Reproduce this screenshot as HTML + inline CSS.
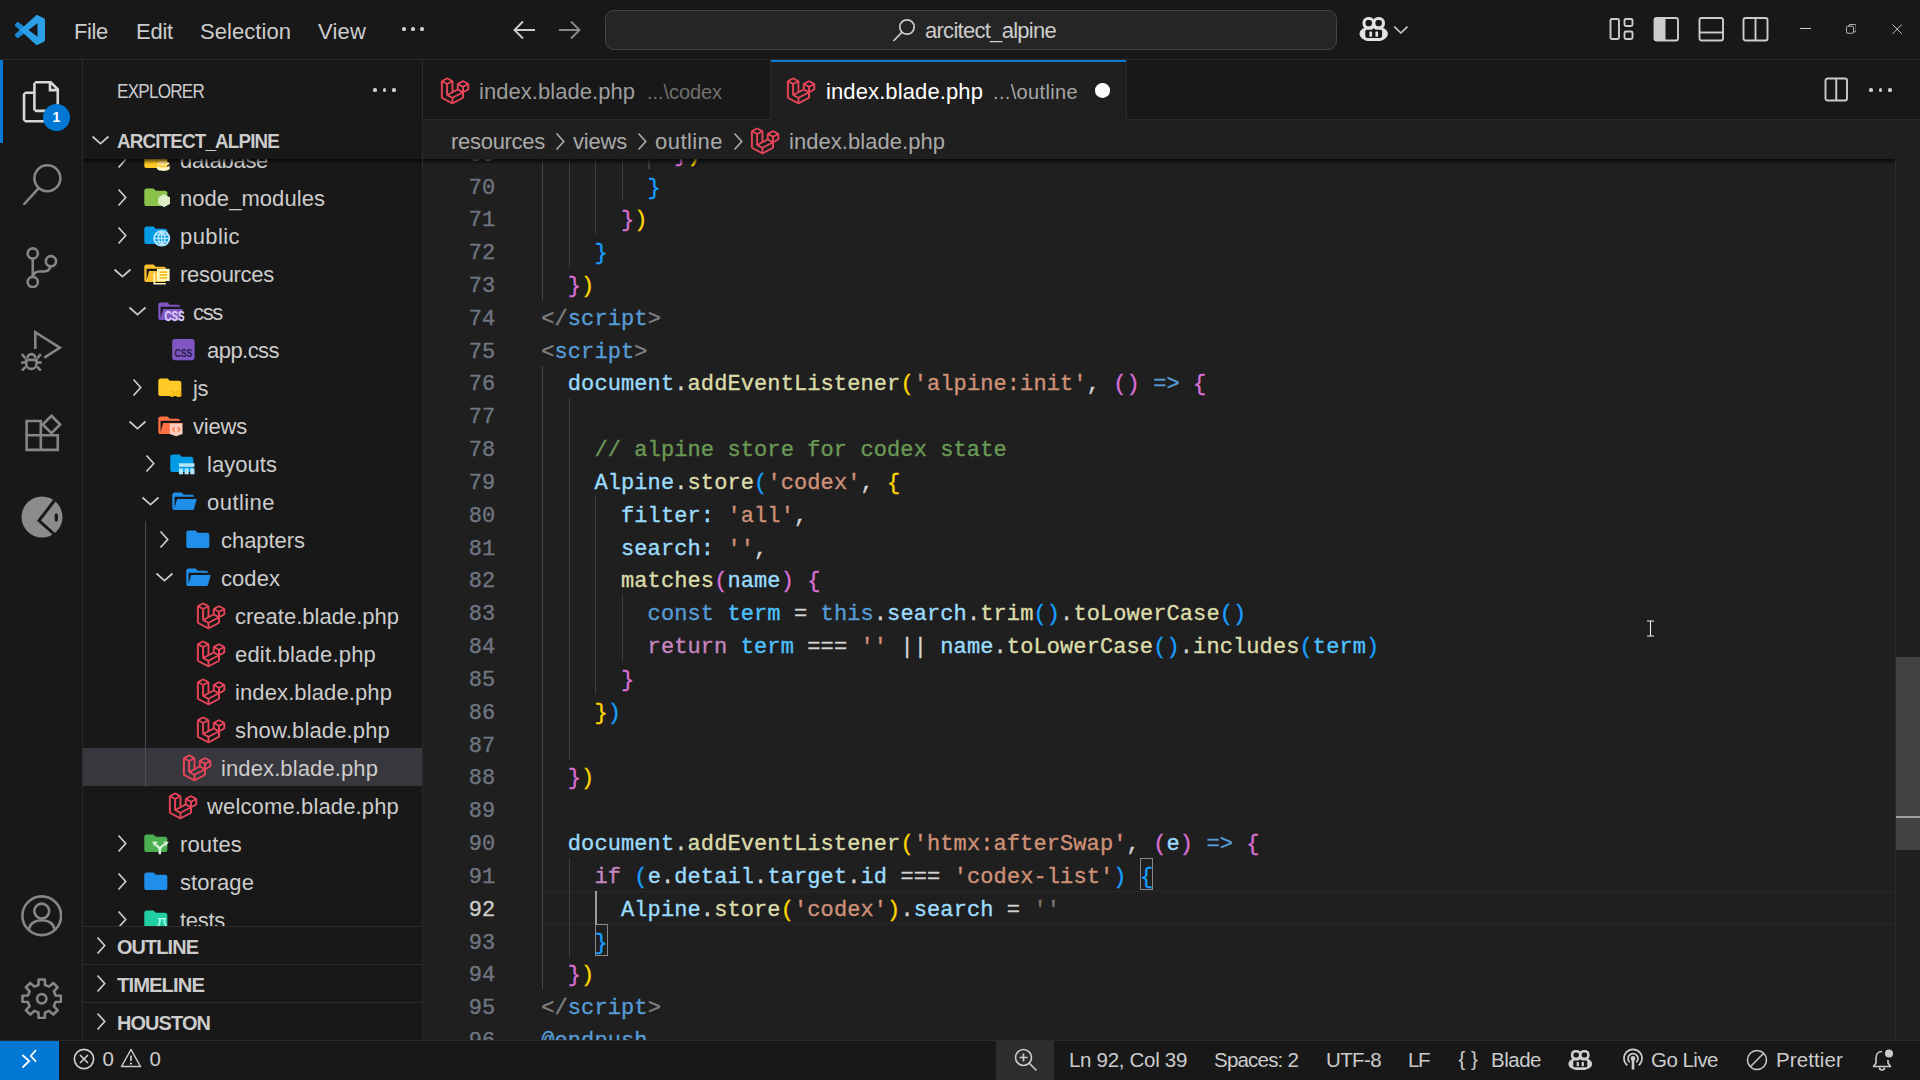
<!DOCTYPE html>
<html lang="en"><head><meta charset="utf-8"><title>index.blade.php - arcitect_alpine - Visual Studio Code</title>
<style>
html,body{margin:0;padding:0;background:#1f1f1f;}
body{width:1920px;height:1080px;position:relative;overflow:hidden;font-family:"Liberation Sans",sans-serif;color:#ccc;}
.b{position:absolute;display:block;}
.t{position:absolute;white-space:pre;}
.c{position:absolute;white-space:pre;font-family:"Liberation Mono",monospace;font-size:22px;-webkit-text-stroke:0.35px;line-height:33px;height:33px;letter-spacing:0.1px;color:#d4d4d4;}
.c span{letter-spacing:inherit}
</style></head>
<body>
<div class="b" style="left:0px;top:0px;width:1920px;height:60px;background:#181818;"></div>
<div class="b" style="left:0px;top:59px;width:1920px;height:1px;background:#2b2b2b;"></div>
<div class="b" style="left:0px;top:60px;width:83px;height:981px;background:#181818;"></div>
<div class="b" style="left:82px;top:60px;width:1px;height:981px;background:#2b2b2b;"></div>
<div class="b" style="left:83px;top:60px;width:340px;height:981px;background:#181818;"></div>
<div class="b" style="left:422px;top:60px;width:1px;height:981px;background:#2b2b2b;"></div>
<div class="b" style="left:423px;top:60px;width:1497px;height:60px;background:#181818;"></div>
<div class="b" style="left:423px;top:119px;width:1497px;height:1px;background:#2b2b2b;"></div>
<div class="b" style="left:423px;top:120px;width:1497px;height:921px;background:#1f1f1f;"></div>
<svg class="b" style="left:15px;top:15px;" width="30" height="30" viewBox="0 0 100 100" preserveAspectRatio="none"><path fill="#2a9fe6" fill-rule="evenodd" d="M70.9119 99.3171C72.4869 99.9307 74.2828 99.8914 75.8725 99.1264L96.4608 89.2197C98.6242 88.1787 100 85.9892 100 83.5872V16.4133C100 14.0113 98.6243 11.8218 96.4609 10.7808L75.8725 0.873756C73.7862 -0.130129 71.3446 0.11576 69.5135 1.44695C69.252 1.63711 69.0028 1.84943 68.769 2.08341L29.3551 38.0415L12.1872 25.0096C10.589 23.7965 8.35363 23.8959 6.86933 25.2461L1.36303 30.2549C-0.452552 31.9064 -0.454633 34.7627 1.35853 36.417L16.2471 50.0001L1.35853 63.5832C-0.454633 65.2374 -0.452552 68.0938 1.36303 69.7453L6.86933 74.7541C8.35363 76.1043 10.589 76.2037 12.1872 74.9905L29.3551 61.9587L68.769 97.9167C69.3925 98.5406 70.1246 99.0104 70.9119 99.3171ZM75.0152 27.2989L45.1091 50.0001L75.0152 72.7012V27.2989Z"/><path fill="#1b86cf" d="M1.36 30.25L6.87 25.25C8.35 23.9 10.59 23.8 12.19 25.01L29.36 38.04 16.25 50 1.36 36.42C-0.45 34.76-0.45 31.91 1.36 30.25ZM1.36 69.75L6.87 74.75C8.35 76.1 10.59 76.2 12.19 74.99L29.36 61.96 16.25 50 1.36 63.58C-0.45 65.24-0.45 68.09 1.36 69.75Z"/></svg>
<div class="t" style="left:74.00px;top:14.50px;font-size:22px;line-height:33px;color:#ccc;letter-spacing:-0.363px;">File</div>
<div class="t" style="left:136.00px;top:14.50px;font-size:22px;line-height:33px;color:#ccc;letter-spacing:-0.228px;">Edit</div>
<div class="t" style="left:200.00px;top:14.50px;font-size:22px;line-height:33px;color:#ccc;letter-spacing:0.055px;">Selection</div>
<div class="t" style="left:318.00px;top:14.50px;font-size:22px;line-height:33px;color:#ccc;letter-spacing:0.178px;">View</div>
<div class="b" style="left:402.4px;top:27.4px;width:3.2px;height:3.2px;border-radius:50%;background:#ccc"></div>
<div class="b" style="left:411.4px;top:27.4px;width:3.2px;height:3.2px;border-radius:50%;background:#ccc"></div>
<div class="b" style="left:420.4px;top:27.4px;width:3.2px;height:3.2px;border-radius:50%;background:#ccc"></div>
<svg class="b" style="left:512px;top:19px;" width="26" height="22" viewBox="0 0 26 22" preserveAspectRatio="none"><path d="M23 11H3 M11 2.500L2.500 11L11 19.500" fill="none" stroke="#ccc" stroke-width="1.9" stroke-linejoin="miter"/></svg>
<svg class="b" style="left:557px;top:19px;" width="26" height="22" viewBox="0 0 26 22" preserveAspectRatio="none"><path d="M2 11H22 M14 2.500L22.500 11L14 19.500" fill="none" stroke="#8a8a8a" stroke-width="1.9"/></svg>
<div class="b" style="left:605px;top:10px;width:730px;height:38px;background:#252525;border:1px solid #444;border-radius:9px"></div>
<svg class="b" style="left:891px;top:17px;" width="26" height="26" viewBox="0 0 26 26" preserveAspectRatio="none"><circle cx="16" cy="10" r="7.2" fill="none" stroke="#ccc" stroke-width="1.7"/><path d="M10.8 15.3L2.5 24" stroke="#ccc" stroke-width="1.7" fill="none"/></svg>
<div class="t" style="left:925.00px;top:13.50px;font-size:22px;line-height:33px;color:#ccc;letter-spacing:-0.724px;">arcitect_alpine</div>
<svg class="b" style="left:1358.5px;top:16.5px;" width="29.4" height="24.8" viewBox="0 0 29.400 24.800" preserveAspectRatio="none"><g fill="#e2e2e2"><rect x="3.500" y="0" width="12.400" height="12.500" rx="5.600"/><rect x="13.500" y="0" width="12.400" height="12.500" rx="5.600"/><ellipse cx="14.700" cy="16.800" rx="14.200" ry="8"/></g><g fill="#181818"><rect x="6.500" y="3" width="6.500" height="6.200" rx="2.400"/><rect x="16.400" y="3" width="6.500" height="6.200" rx="2.400"/><path d="M6.300 14.300C6.300 13.400 7 12.800 7.900 12.800H12.700L14.700 11.300L16.700 12.800H21.500C22.400 12.800 23.100 13.400 23.100 14.300V19C23.100 20.100 22.300 20.900 21.200 20.900H8.200C7.100 20.900 6.300 20.100 6.300 19Z"/></g><g fill="#e2e2e2"><rect x="10.400" y="14.400" width="2.700" height="5.300" rx="0.600"/><rect x="16.400" y="14.400" width="2.700" height="5.300" rx="0.600"/></g></svg>
<svg class="b" style="left:1393px;top:25px;" width="16" height="10" viewBox="0 0 16 10" preserveAspectRatio="none"><path d="M1.300 1.600L7.900 8L14.500 1.600" fill="none" stroke="#ccc" stroke-width="1.600"/></svg>
<svg class="b" style="left:1609px;top:17px;" width="27" height="25" viewBox="0 0 27 25" preserveAspectRatio="none"><rect x="1.500" y="2" width="8.500" height="20" rx="1.500" fill="none" stroke="#ccc" stroke-width="1.900"/><rect x="15.500" y="2" width="8" height="7" rx="1.500" fill="none" stroke="#ccc" stroke-width="1.900"/><rect x="15.500" y="14.500" width="8" height="7.500" rx="1.500" fill="none" stroke="#ccc" stroke-width="1.900"/></svg>
<svg class="b" style="left:1653px;top:16px;" width="27" height="27" viewBox="0 0 27 27" preserveAspectRatio="none"><rect x="1.500" y="2" width="23.500" height="22.500" rx="2" fill="none" stroke="#ccc" stroke-width="1.900"/><rect x="1.500" y="2" width="11" height="22.500" fill="#ccc"/></svg>
<svg class="b" style="left:1698px;top:16px;" width="27" height="27" viewBox="0 0 27 27" preserveAspectRatio="none"><rect x="1.500" y="2" width="23.500" height="22.500" rx="2" fill="none" stroke="#ccc" stroke-width="1.900"/><path d="M1.500 16.500H25" stroke="#ccc" stroke-width="1.900"/></svg>
<svg class="b" style="left:1742px;top:16px;" width="28" height="27" viewBox="0 0 28 27" preserveAspectRatio="none"><rect x="1.500" y="2" width="24" height="22.500" rx="2" fill="none" stroke="#ccc" stroke-width="1.900"/><path d="M13.500 2V24.500" stroke="#ccc" stroke-width="1.900"/></svg>
<div class="b" style="left:1800px;top:28px;width:11px;height:1px;background:#ccc;"></div>
<svg class="b" style="left:1845.8px;top:24.3px;" width="10.6" height="10.6" viewBox="0 0 12 12" preserveAspectRatio="none"><rect x="0.500" y="2.500" width="8" height="8" rx="1.500" fill="none" stroke="#ccc" stroke-width="1"/><path d="M3 2.500V2C3 1.200 3.700 0.500 4.500 0.500H10C10.800 0.500 11.500 1.200 11.500 2V7.500C11.500 8.300 10.800 9 10 9H9" fill="none" stroke="#ccc" stroke-width="1"/></svg>
<svg class="b" style="left:1892px;top:23.8px;" width="10.4" height="10.4" viewBox="0 0 12 12" preserveAspectRatio="none"><path d="M0.500 0.500L11.500 11.500M11.500 0.500L0.500 11.500" stroke="#ccc" stroke-width="1.100"/></svg>
<div class="b" style="left:0px;top:60px;width:3px;height:83px;background:#0078d4;"></div>
<svg class="b" style="left:20.75px;top:81.25px;" width="41.5" height="41.5" viewBox="0 0 24 24" preserveAspectRatio="none"><path fill="#d7d7d7" d="M17.5 0h-9L7 1.5V6H2.5L1 7.500v15.070L2.500 24h12.070L16 22.570V18h4.700l1.300-1.430V4.500L17.500 0zm0 2.120l2.380 2.380H17.500V2.120zm-3 20.380h-12v-15H7v9.070L8.500 18h6v4.500zm6-6h-12v-15H16V6h4.500v10.500z"/></svg>
<div class="b" style="left:43px;top:103.500px;width:27px;height:27px;border-radius:50%;background:#0078d4;color:#fff;font-weight:bold;font-size:14px;line-height:27px;text-align:center">1</div>
<svg class="b" style="left:20.75px;top:163.85px;" width="41.5" height="41.5" viewBox="0 0 24 24" preserveAspectRatio="none"><circle cx="15.250" cy="8.250" r="7.500" fill="none" stroke="#868686" stroke-width="1.500"/><path d="M10.200 13.900L1.500 23.600" stroke="#868686" stroke-width="1.500"/></svg>
<svg class="b" style="left:20.75px;top:246.85000000000002px;" width="41.5" height="41.5" viewBox="0 0 24 24" preserveAspectRatio="none"><g fill="none" stroke="#868686" stroke-width="1.500"><circle cx="6.800" cy="3.750" r="2.950"/><circle cx="6.800" cy="20.200" r="2.950"/><circle cx="17.300" cy="8.200" r="2.950"/><path d="M6.800 6.700V17.250M17 11.200C16.600 13.300 15 14.200 13.500 14.200H10.600C8.500 14.200 6.800 15.600 6.800 17.250"/></g></svg>
<svg class="b" style="left:20.75px;top:329.75px;" width="41.5" height="41.5" viewBox="0 0 24 24" preserveAspectRatio="none"><g fill="none" stroke="#868686" stroke-width="1.500"><path d="M8.250 11V1.300L22.400 10.250L13.500 16"/><path d="M3 17.250V19.500A3 3 0 0 0 9 19.500V17.250Z M3.750 16.200A2.250 2.250 0 0 1 8.250 16.200 M0.500 14L2.500 16.200 M11.500 14L9.500 16.200 M0 18.750H3 M9 18.750H12 M0.500 23.500L2.600 21.300 M11.500 23.500L9.400 21.300"/></g></svg>
<svg class="b" style="left:20.75px;top:412.75px;" width="41.5" height="41.5" viewBox="0 0 24 24" preserveAspectRatio="none"><g fill="none" stroke="#868686" stroke-width="1.500"><path d="M3.250 4.650H11.450V12.900H21.250V21.350H3.250Z M3.250 12.900H11.450V21.350"/><path d="M17.600 1.600L22.650 6.650L17.600 11.700L12.550 6.650Z"/></g></svg>
<svg class="b" style="left:20.5px;top:495.5px;" width="42" height="42" viewBox="0 0 42 42" preserveAspectRatio="none"><circle cx="21" cy="21" r="20.500" fill="#8b8b8b"/><path d="M33.500 4.500L18 24.500L33.500 38.500" fill="none" stroke="#181818" stroke-width="3"/><ellipse cx="35.300" cy="21.500" rx="1.700" ry="4.300" fill="#181818"/></svg>
<svg class="b" style="left:20.75px;top:895.25px;" width="41.5" height="41.5" viewBox="0 0 24 24" preserveAspectRatio="none"><g fill="none" stroke="#868686" stroke-width="1.500"><circle cx="12" cy="12" r="11.200"/><circle cx="12" cy="9.300" r="4.300"/><path d="M4.300 20.200C5.200 16.400 8.300 14.600 12 14.600S18.800 16.400 19.700 20.200"/></g></svg>
<svg class="b" style="left:20.75px;top:977.75px;" width="41.5" height="41.5" viewBox="0 0 24 24" preserveAspectRatio="none"><g fill="none" stroke="#868686" stroke-width="1.500" stroke-linejoin="round"><path d="M10.09 4.03L10.23 0.84L13.77 0.84L13.91 4.03L16.28 5.01L18.64 2.86L21.14 5.36L18.99 7.72L19.97 10.09L23.16 10.23L23.16 13.77L19.97 13.91L18.99 16.28L21.14 18.64L18.64 21.14L16.28 18.99L13.91 19.97L13.77 23.16L10.23 23.16L10.09 19.97L7.72 18.99L5.36 21.14L2.86 18.64L5.01 16.28L4.03 13.91L0.84 13.77L0.84 10.23L4.03 10.09L5.01 7.72L2.86 5.36L5.36 2.86L7.72 5.01Z"/><circle cx="12" cy="12" r="2.700"/></g></svg>
<div class="t" style="left:117.00px;top:76.00px;font-size:20px;line-height:30px;color:#ccc;letter-spacing:-0.900px;transform:scaleX(0.8552);transform-origin:0 50%;">EXPLORER</div>
<div class="b" style="left:373.4px;top:88.4px;width:3.200px;height:3.200px;border-radius:50%;background:#ccc"></div>
<div class="b" style="left:382.9px;top:88.4px;width:3.200px;height:3.200px;border-radius:50%;background:#ccc"></div>
<div class="b" style="left:392.4px;top:88.4px;width:3.200px;height:3.200px;border-radius:50%;background:#ccc"></div>
<svg class="b" style="left:90.5px;top:135px;" width="19" height="10" viewBox="0 0 19 10" preserveAspectRatio="none"><path d="M1.500 1.500L9.500 8.700L17.500 1.500" fill="none" stroke="#ccc" stroke-width="1.700"/></svg>
<div class="t" style="left:117.00px;top:126.00px;font-size:20px;line-height:30px;color:#ccc;letter-spacing:-0.900px;font-weight:bold;transform:scaleX(0.9415);transform-origin:0 50%;">ARCITECT_ALPINE</div>
<div class="b" style="left:83px;top:159px;width:339px;height:767px;overflow:hidden">
<div class="b" style="left:0px;top:589.3px;width:339px;height:38px;background:#37373d;"></div>
<div class="b" style="left:61.69999999999999px;top:362px;width:1px;height:265.5px;background:#4a4a4a;"></div>
<svg class="b" style="left:34px;top:-9.2px;" width="10" height="19" viewBox="0 0 10 19" preserveAspectRatio="none"><path d="M1.500 1.500L8.700 9.500L1.500 17.500" fill="none" stroke="#ccc" stroke-width="1.700"/></svg>
<svg class="b" style="left:58.7px;top:-13.024999999999999px;overflow:visible" width="27.65" height="26.549999999999997" viewBox="0 0 24 24" preserveAspectRatio="none"><path fill="#ffca28" d="M10 4H4c-1.110 0-2 .890-2 2v12a2 2 0 0 0 2 2h16a2 2 0 0 0 2-2V8c0-1.110-.900-2-2-2h-8l-2-2z"/><ellipse cx="18.500" cy="15.800" rx="5.500" ry="2" fill="#ffe28a"/><path d="M13 17.200v3.200c0 1.200 2.400 2.100 5.500 2.100s5.500-.900 5.500-2.100v-3.200c0 1.200-2.400 2.100-5.500 2.100s-5.500-.900-5.500-2.100z" fill="#fff3c4"/></svg>
<div class="t" style="left:97.00px;top:-15.40px;font-size:22px;line-height:33px;color:#ccc;letter-spacing:-0.316px;">database</div>
<svg class="b" style="left:34px;top:28.799999999999997px;" width="10" height="19" viewBox="0 0 10 19" preserveAspectRatio="none"><path d="M1.500 1.500L8.700 9.500L1.500 17.500" fill="none" stroke="#ccc" stroke-width="1.700"/></svg>
<svg class="b" style="left:58.7px;top:24.975px;overflow:visible" width="27.65" height="26.549999999999997" viewBox="0 0 24 24" preserveAspectRatio="none"><path fill="#8bc34a" d="M10 4H4c-1.110 0-2 .890-2 2v12a2 2 0 0 0 2 2h16a2 2 0 0 0 2-2V8c0-1.110-.900-2-2-2h-8l-2-2z"/><path d="M19.200 9.800l4.600 2.650v5.300l-4.600 2.650-4.600-2.650v-5.300z" fill="#dcedc8" stroke="#dcedc8" stroke-width="1" stroke-linejoin="round"/></svg>
<div class="t" style="left:97.00px;top:22.60px;font-size:22px;line-height:33px;color:#ccc;letter-spacing:0.055px;">node_modules</div>
<svg class="b" style="left:34px;top:66.8px;" width="10" height="19" viewBox="0 0 10 19" preserveAspectRatio="none"><path d="M1.500 1.500L8.700 9.500L1.500 17.500" fill="none" stroke="#ccc" stroke-width="1.700"/></svg>
<svg class="b" style="left:58.7px;top:62.974999999999994px;overflow:visible" width="27.65" height="26.549999999999997" viewBox="0 0 24 24" preserveAspectRatio="none"><path fill="#039be5" d="M10 4H4c-1.110 0-2 .890-2 2v12a2 2 0 0 0 2 2h16a2 2 0 0 0 2-2V8c0-1.110-.900-2-2-2h-8l-2-2z"/><circle cx="17.100" cy="14.800" r="6.600" fill="#039be5" stroke="#b3e5fc" stroke-width="1.700"/><path d="M10.500 14.800h13.200M11.400 11.600h11.400M11.400 18h11.400M17.100 8.200v13.200M17.100 8.200c-3.800 3.600-3.800 9.600 0 13.200M17.100 8.200c3.800 3.600 3.800 9.600 0 13.200" fill="none" stroke="#b3e5fc" stroke-width="1.250"/></svg>
<div class="t" style="left:97.00px;top:60.60px;font-size:22px;line-height:33px;color:#ccc;letter-spacing:0.419px;">public</div>
<svg class="b" style="left:29.5px;top:109.2px;" width="19" height="10" viewBox="0 0 19 10" preserveAspectRatio="none"><path d="M1.500 1.500L9.500 8.700L17.500 1.500" fill="none" stroke="#ccc" stroke-width="1.700"/></svg>
<svg class="b" style="left:58.7px;top:100.975px;overflow:visible" width="27.65" height="26.549999999999997" viewBox="0 0 24 24" preserveAspectRatio="none"><path fill="#fbc02d" d="M19 20H4a2 2 0 0 1-2-2V6c0-1.110.890-2 2-2h6l2 2h7a2 2 0 0 1 2 2H4v10l2.140-8h17.070l-2.280 8.500c-.230.870-1.010 1.500-1.930 1.500z"/><rect x="13" y="8" width="11" height="11" fill="#fff9c4"/><path d="M15.300 10.900h6.400M15.300 13.500h6.400M15.300 16.100h6.400" stroke="#f9bd22" stroke-width="1.500"/><path d="M10.700 11.500v10h10" fill="none" stroke="#fff9c4" stroke-width="1.500"/></svg>
<div class="t" style="left:97.00px;top:98.60px;font-size:22px;line-height:33px;color:#ccc;letter-spacing:-0.289px;">resources</div>
<svg class="b" style="left:44.5px;top:147.2px;" width="19" height="10" viewBox="0 0 19 10" preserveAspectRatio="none"><path d="M1.500 1.500L9.500 8.700L17.500 1.500" fill="none" stroke="#ccc" stroke-width="1.700"/></svg>
<svg class="b" style="left:72.7px;top:138.97500000000002px;overflow:visible" width="27.65" height="26.549999999999997" viewBox="0 0 24 24" preserveAspectRatio="none"><path fill="#7e57c2" d="M19 20H4a2 2 0 0 1-2-2V6c0-1.110.890-2 2-2h6l2 2h7a2 2 0 0 1 2 2H4v10l2.140-8h17.070l-2.280 8.500c-.230.870-1.010 1.500-1.930 1.500z"/><text x="7.400" y="20.900" font-family="Liberation Sans, sans-serif" font-weight="bold" font-size="12.400" fill="#dccbf8" stroke="#dccbf8" stroke-width="0.300" textLength="17.400" lengthAdjust="spacingAndGlyphs">CSS</text></svg>
<div class="t" style="left:110.00px;top:136.60px;font-size:22px;line-height:33px;color:#ccc;letter-spacing:-1.333px;">css</div>
<svg class="b" style="left:88px;top:176.675px;" width="27.65" height="27.65" viewBox="0 0 24 24" preserveAspectRatio="none"><rect x="1" y="2.500" width="19.500" height="18.500" rx="2.500" fill="#7e57c2"/><text x="3" y="18.500" font-family="Liberation Sans, sans-serif" font-weight="bold" font-size="10" fill="#2a1a4a" textLength="15.500" lengthAdjust="spacingAndGlyphs">CSS</text></svg>
<div class="t" style="left:124.00px;top:174.60px;font-size:22px;line-height:33px;color:#ccc;letter-spacing:-0.546px;">app.css</div>
<svg class="b" style="left:49px;top:218.8px;" width="10" height="19" viewBox="0 0 10 19" preserveAspectRatio="none"><path d="M1.500 1.500L8.700 9.500L1.500 17.500" fill="none" stroke="#ccc" stroke-width="1.700"/></svg>
<svg class="b" style="left:72.7px;top:214.97500000000002px;overflow:visible" width="27.65" height="26.549999999999997" viewBox="0 0 24 24" preserveAspectRatio="none"><path fill="#ffca28" d="M10 4H4c-1.110 0-2 .890-2 2v12a2 2 0 0 0 2 2h16a2 2 0 0 0 2-2V8c0-1.110-.900-2-2-2h-8l-2-2z"/><text x="11.500" y="20.500" font-family="Liberation Sans, sans-serif" font-weight="bold" font-size="9" fill="#f0b400">JS</text></svg>
<div class="t" style="left:110.00px;top:212.60px;font-size:22px;line-height:33px;color:#ccc;letter-spacing:-0.444px;">js</div>
<svg class="b" style="left:44.5px;top:261.2px;" width="19" height="10" viewBox="0 0 19 10" preserveAspectRatio="none"><path d="M1.500 1.500L9.500 8.700L17.500 1.500" fill="none" stroke="#ccc" stroke-width="1.700"/></svg>
<svg class="b" style="left:72.7px;top:252.97500000000002px;overflow:visible" width="27.65" height="26.549999999999997" viewBox="0 0 24 24" preserveAspectRatio="none"><path fill="#ff7043" d="M19 20H4a2 2 0 0 1-2-2V6c0-1.110.890-2 2-2h6l2 2h7a2 2 0 0 1 2 2H4v10l2.140-8h17.070l-2.280 8.500c-.230.870-1.010 1.500-1.930 1.500z"/><path d="M12 10.500h11v9.500l-5.500 2-5.500-2z" fill="#ffccbc"/><path d="M16.300 13.800l-2 2 2 2M18.700 13.800l2 2-2 2" fill="none" stroke="#ff7043" stroke-width="1.100"/></svg>
<div class="t" style="left:110.00px;top:250.60px;font-size:22px;line-height:33px;color:#ccc;letter-spacing:-0.202px;">views</div>
<svg class="b" style="left:62px;top:294.8px;" width="10" height="19" viewBox="0 0 10 19" preserveAspectRatio="none"><path d="M1.500 1.500L8.700 9.500L1.500 17.500" fill="none" stroke="#ccc" stroke-width="1.700"/></svg>
<svg class="b" style="left:85.39999999999999px;top:290.975px;overflow:visible" width="27.65" height="26.549999999999997" viewBox="0 0 24 24" preserveAspectRatio="none"><path fill="#039be5" d="M10 4H4c-1.110 0-2 .890-2 2v12a2 2 0 0 0 2 2h16a2 2 0 0 0 2-2V8c0-1.110-.900-2-2-2h-8l-2-2z"/><rect x="9.500" y="12" width="13.500" height="3.200" fill="#b3e5fc"/><rect x="9.500" y="16.600" width="3.600" height="5.400" fill="#b3e5fc"/><rect x="14.400" y="16.600" width="3.600" height="5.400" fill="#b3e5fc"/><rect x="19.300" y="16.600" width="3.700" height="5.400" fill="#b3e5fc"/></svg>
<div class="t" style="left:124.00px;top:288.60px;font-size:22px;line-height:33px;color:#ccc;letter-spacing:0.042px;">layouts</div>
<svg class="b" style="left:57.5px;top:337.2px;" width="19" height="10" viewBox="0 0 19 10" preserveAspectRatio="none"><path d="M1.500 1.500L9.500 8.700L17.500 1.500" fill="none" stroke="#ccc" stroke-width="1.700"/></svg>
<svg class="b" style="left:86.7px;top:328.975px;overflow:visible" width="27.65" height="26.549999999999997" viewBox="0 0 24 24" preserveAspectRatio="none"><path fill="#1f8fe9" d="M19 20H4a2 2 0 0 1-2-2V6c0-1.110.890-2 2-2h6l2 2h7a2 2 0 0 1 2 2H4v10l2.140-8h17.070l-2.280 8.500c-.230.870-1.010 1.500-1.930 1.500z"/></svg>
<div class="t" style="left:124.00px;top:326.60px;font-size:22px;line-height:33px;color:#ccc;letter-spacing:0.453px;">outline</div>
<svg class="b" style="left:76px;top:370.8px;" width="10" height="19" viewBox="0 0 10 19" preserveAspectRatio="none"><path d="M1.500 1.500L8.700 9.500L1.500 17.500" fill="none" stroke="#ccc" stroke-width="1.700"/></svg>
<svg class="b" style="left:100.7px;top:366.975px;overflow:visible" width="27.65" height="26.549999999999997" viewBox="0 0 24 24" preserveAspectRatio="none"><path fill="#1f8fe9" d="M10 4H4c-1.110 0-2 .890-2 2v12a2 2 0 0 0 2 2h16a2 2 0 0 0 2-2V8c0-1.110-.900-2-2-2h-8l-2-2z"/></svg>
<div class="t" style="left:138.00px;top:364.60px;font-size:22px;line-height:33px;color:#ccc;letter-spacing:-0.048px;">chapters</div>
<svg class="b" style="left:71.5px;top:413.2px;" width="19" height="10" viewBox="0 0 19 10" preserveAspectRatio="none"><path d="M1.500 1.500L9.500 8.700L17.500 1.500" fill="none" stroke="#ccc" stroke-width="1.700"/></svg>
<svg class="b" style="left:100.7px;top:404.975px;overflow:visible" width="27.65" height="26.549999999999997" viewBox="0 0 24 24" preserveAspectRatio="none"><path fill="#1f8fe9" d="M19 20H4a2 2 0 0 1-2-2V6c0-1.110.890-2 2-2h6l2 2h7a2 2 0 0 1 2 2H4v10l2.140-8h17.070l-2.280 8.500c-.230.870-1.010 1.500-1.930 1.500z"/></svg>
<div class="t" style="left:138.00px;top:402.60px;font-size:22px;line-height:33px;color:#ccc;letter-spacing:0.059px;">codex</div>
<svg class="b" style="left:114px;top:443.6px;overflow:visible" width="28.2" height="25.8" viewBox="0 0 24 24" preserveAspectRatio="none"><path fill="#f0475b" stroke="#f0475b" stroke-width="0.850" stroke-linejoin="round" d="M23.642 5.430a.364.364 0 0 1 .014.100v5.149c0 .135-.073.260-.189.326l-4.323 2.490v4.934a.378.378 0 0 1-.188.326L9.930 23.949a.316.316 0 0 1-.066.027c-.008.002-.016.008-.024.010a.348.348 0 0 1-.192 0c-.011-.002-.020-.008-.030-.012-.020-.008-.042-.014-.062-.025L.533 18.755a.376.376 0 0 1-.189-.326V2.974c0-.033.005-.066.014-.098.003-.012.010-.020.014-.032a.369.369 0 0 1 .023-.058c.004-.013.015-.022.023-.033l.033-.045c.012-.010.025-.018.037-.027.014-.012.027-.024.041-.034H.530L5.043.050a.375.375 0 0 1 .375 0L9.930 2.647h.002c.015.010.027.021.040.033l.038.027c.013.014.020.030.033.045.008.011.020.021.025.033.010.020.017.038.024.058.003.011.010.021.013.032.010.031.014.064.014.098v9.652l3.760-2.164V5.527c0-.033.004-.066.013-.098.003-.010.010-.020.013-.032a.487.487 0 0 1 .024-.059c.007-.012.018-.020.025-.033.012-.015.021-.030.033-.043.012-.012.025-.020.037-.028.014-.010.026-.023.041-.032h.001l4.513-2.598a.375.375 0 0 1 .375 0l4.513 2.598c.016.010.027.021.042.031.012.010.025.018.036.028.013.014.022.030.034.044.008.012.019.021.024.033.011.020.018.040.024.060.006.010.012.021.015.032zm-.740 5.032V6.179l-1.578.908-2.182 1.256v4.283zm-4.510 7.750v-4.287l-2.147 1.225-6.126 3.498v4.325zM1.093 3.624v14.588l8.273 4.761v-4.325l-4.322-2.445-.002-.003H5.040c-.014-.010-.025-.021-.040-.031-.011-.010-.024-.018-.035-.027l-.001-.002c-.013-.012-.021-.025-.031-.040-.010-.011-.021-.022-.028-.036h-.002c-.008-.014-.013-.031-.020-.047-.006-.016-.014-.027-.018-.043a.490.490 0 0 1-.008-.057c-.002-.014-.006-.027-.006-.041V5.789l-2.180-1.257zM5.230.810L1.470 2.974l3.760 2.164 3.758-2.164zm1.956 13.505l2.182-1.256V3.624l-1.580.910-2.182 1.255v9.435zm11.581-10.950l-3.760 2.163 3.760 2.163 3.759-2.164zm-.376 4.978L16.210 7.087 14.630 6.180v4.283l2.182 1.256 1.580.908zm-8.650 9.654l5.514-3.148 2.756-1.572-3.757-2.163-4.323 2.489-3.941 2.270z"/></svg>
<div class="t" style="left:152.00px;top:440.60px;font-size:22px;line-height:33px;color:#ccc;letter-spacing:0.006px;">create.blade.php</div>
<svg class="b" style="left:114px;top:481.6px;overflow:visible" width="28.2" height="25.8" viewBox="0 0 24 24" preserveAspectRatio="none"><path fill="#f0475b" stroke="#f0475b" stroke-width="0.850" stroke-linejoin="round" d="M23.642 5.430a.364.364 0 0 1 .014.100v5.149c0 .135-.073.260-.189.326l-4.323 2.490v4.934a.378.378 0 0 1-.188.326L9.930 23.949a.316.316 0 0 1-.066.027c-.008.002-.016.008-.024.010a.348.348 0 0 1-.192 0c-.011-.002-.020-.008-.030-.012-.020-.008-.042-.014-.062-.025L.533 18.755a.376.376 0 0 1-.189-.326V2.974c0-.033.005-.066.014-.098.003-.012.010-.020.014-.032a.369.369 0 0 1 .023-.058c.004-.013.015-.022.023-.033l.033-.045c.012-.010.025-.018.037-.027.014-.012.027-.024.041-.034H.530L5.043.050a.375.375 0 0 1 .375 0L9.930 2.647h.002c.015.010.027.021.040.033l.038.027c.013.014.020.030.033.045.008.011.020.021.025.033.010.020.017.038.024.058.003.011.010.021.013.032.010.031.014.064.014.098v9.652l3.760-2.164V5.527c0-.033.004-.066.013-.098.003-.010.010-.020.013-.032a.487.487 0 0 1 .024-.059c.007-.012.018-.020.025-.033.012-.015.021-.030.033-.043.012-.012.025-.020.037-.028.014-.010.026-.023.041-.032h.001l4.513-2.598a.375.375 0 0 1 .375 0l4.513 2.598c.016.010.027.021.042.031.012.010.025.018.036.028.013.014.022.030.034.044.008.012.019.021.024.033.011.020.018.040.024.060.006.010.012.021.015.032zm-.740 5.032V6.179l-1.578.908-2.182 1.256v4.283zm-4.510 7.750v-4.287l-2.147 1.225-6.126 3.498v4.325zM1.093 3.624v14.588l8.273 4.761v-4.325l-4.322-2.445-.002-.003H5.040c-.014-.010-.025-.021-.040-.031-.011-.010-.024-.018-.035-.027l-.001-.002c-.013-.012-.021-.025-.031-.040-.010-.011-.021-.022-.028-.036h-.002c-.008-.014-.013-.031-.020-.047-.006-.016-.014-.027-.018-.043a.490.490 0 0 1-.008-.057c-.002-.014-.006-.027-.006-.041V5.789l-2.180-1.257zM5.230.810L1.470 2.974l3.760 2.164 3.758-2.164zm1.956 13.505l2.182-1.256V3.624l-1.580.910-2.182 1.255v9.435zm11.581-10.950l-3.760 2.163 3.760 2.163 3.759-2.164zm-.376 4.978L16.210 7.087 14.630 6.180v4.283l2.182 1.256 1.580.908zm-8.650 9.654l5.514-3.148 2.756-1.572-3.757-2.163-4.323 2.489-3.941 2.270z"/></svg>
<div class="t" style="left:152.00px;top:478.60px;font-size:22px;line-height:33px;color:#ccc;letter-spacing:0.198px;">edit.blade.php</div>
<svg class="b" style="left:114px;top:519.6px;overflow:visible" width="28.2" height="25.8" viewBox="0 0 24 24" preserveAspectRatio="none"><path fill="#f0475b" stroke="#f0475b" stroke-width="0.850" stroke-linejoin="round" d="M23.642 5.430a.364.364 0 0 1 .014.100v5.149c0 .135-.073.260-.189.326l-4.323 2.490v4.934a.378.378 0 0 1-.188.326L9.930 23.949a.316.316 0 0 1-.066.027c-.008.002-.016.008-.024.010a.348.348 0 0 1-.192 0c-.011-.002-.020-.008-.030-.012-.020-.008-.042-.014-.062-.025L.533 18.755a.376.376 0 0 1-.189-.326V2.974c0-.033.005-.066.014-.098.003-.012.010-.020.014-.032a.369.369 0 0 1 .023-.058c.004-.013.015-.022.023-.033l.033-.045c.012-.010.025-.018.037-.027.014-.012.027-.024.041-.034H.530L5.043.050a.375.375 0 0 1 .375 0L9.930 2.647h.002c.015.010.027.021.040.033l.038.027c.013.014.020.030.033.045.008.011.020.021.025.033.010.020.017.038.024.058.003.011.010.021.013.032.010.031.014.064.014.098v9.652l3.760-2.164V5.527c0-.033.004-.066.013-.098.003-.010.010-.020.013-.032a.487.487 0 0 1 .024-.059c.007-.012.018-.020.025-.033.012-.015.021-.030.033-.043.012-.012.025-.020.037-.028.014-.010.026-.023.041-.032h.001l4.513-2.598a.375.375 0 0 1 .375 0l4.513 2.598c.016.010.027.021.042.031.012.010.025.018.036.028.013.014.022.030.034.044.008.012.019.021.024.033.011.020.018.040.024.060.006.010.012.021.015.032zm-.740 5.032V6.179l-1.578.908-2.182 1.256v4.283zm-4.510 7.750v-4.287l-2.147 1.225-6.126 3.498v4.325zM1.093 3.624v14.588l8.273 4.761v-4.325l-4.322-2.445-.002-.003H5.040c-.014-.010-.025-.021-.040-.031-.011-.010-.024-.018-.035-.027l-.001-.002c-.013-.012-.021-.025-.031-.040-.010-.011-.021-.022-.028-.036h-.002c-.008-.014-.013-.031-.020-.047-.006-.016-.014-.027-.018-.043a.490.490 0 0 1-.008-.057c-.002-.014-.006-.027-.006-.041V5.789l-2.180-1.257zM5.230.810L1.470 2.974l3.760 2.164 3.758-2.164zm1.956 13.505l2.182-1.256V3.624l-1.580.910-2.182 1.255v9.435zm11.581-10.950l-3.760 2.163 3.760 2.163 3.759-2.164zm-.376 4.978L16.210 7.087 14.630 6.180v4.283l2.182 1.256 1.580.908zm-8.650 9.654l5.514-3.148 2.756-1.572-3.757-2.163-4.323 2.489-3.941 2.270z"/></svg>
<div class="t" style="left:152.00px;top:516.60px;font-size:22px;line-height:33px;color:#ccc;letter-spacing:0.109px;">index.blade.php</div>
<svg class="b" style="left:114px;top:557.6px;overflow:visible" width="28.2" height="25.8" viewBox="0 0 24 24" preserveAspectRatio="none"><path fill="#f0475b" stroke="#f0475b" stroke-width="0.850" stroke-linejoin="round" d="M23.642 5.430a.364.364 0 0 1 .014.100v5.149c0 .135-.073.260-.189.326l-4.323 2.490v4.934a.378.378 0 0 1-.188.326L9.930 23.949a.316.316 0 0 1-.066.027c-.008.002-.016.008-.024.010a.348.348 0 0 1-.192 0c-.011-.002-.020-.008-.030-.012-.020-.008-.042-.014-.062-.025L.533 18.755a.376.376 0 0 1-.189-.326V2.974c0-.033.005-.066.014-.098.003-.012.010-.020.014-.032a.369.369 0 0 1 .023-.058c.004-.013.015-.022.023-.033l.033-.045c.012-.010.025-.018.037-.027.014-.012.027-.024.041-.034H.530L5.043.050a.375.375 0 0 1 .375 0L9.930 2.647h.002c.015.010.027.021.040.033l.038.027c.013.014.020.030.033.045.008.011.020.021.025.033.010.020.017.038.024.058.003.011.010.021.013.032.010.031.014.064.014.098v9.652l3.760-2.164V5.527c0-.033.004-.066.013-.098.003-.010.010-.020.013-.032a.487.487 0 0 1 .024-.059c.007-.012.018-.020.025-.033.012-.015.021-.030.033-.043.012-.012.025-.020.037-.028.014-.010.026-.023.041-.032h.001l4.513-2.598a.375.375 0 0 1 .375 0l4.513 2.598c.016.010.027.021.042.031.012.010.025.018.036.028.013.014.022.030.034.044.008.012.019.021.024.033.011.020.018.040.024.060.006.010.012.021.015.032zm-.740 5.032V6.179l-1.578.908-2.182 1.256v4.283zm-4.510 7.750v-4.287l-2.147 1.225-6.126 3.498v4.325zM1.093 3.624v14.588l8.273 4.761v-4.325l-4.322-2.445-.002-.003H5.040c-.014-.010-.025-.021-.040-.031-.011-.010-.024-.018-.035-.027l-.001-.002c-.013-.012-.021-.025-.031-.040-.010-.011-.021-.022-.028-.036h-.002c-.008-.014-.013-.031-.020-.047-.006-.016-.014-.027-.018-.043a.490.490 0 0 1-.008-.057c-.002-.014-.006-.027-.006-.041V5.789l-2.180-1.257zM5.230.810L1.470 2.974l3.760 2.164 3.758-2.164zm1.956 13.505l2.182-1.256V3.624l-1.580.910-2.182 1.255v9.435zm11.581-10.950l-3.760 2.163 3.760 2.163 3.759-2.164zm-.376 4.978L16.210 7.087 14.630 6.180v4.283l2.182 1.256 1.580.908zm-8.650 9.654l5.514-3.148 2.756-1.572-3.757-2.163-4.323 2.489-3.941 2.270z"/></svg>
<div class="t" style="left:152.00px;top:554.60px;font-size:22px;line-height:33px;color:#ccc;letter-spacing:0.149px;">show.blade.php</div>
<svg class="b" style="left:100px;top:595.6px;overflow:visible" width="28.2" height="25.8" viewBox="0 0 24 24" preserveAspectRatio="none"><path fill="#f0475b" stroke="#f0475b" stroke-width="0.850" stroke-linejoin="round" d="M23.642 5.430a.364.364 0 0 1 .014.100v5.149c0 .135-.073.260-.189.326l-4.323 2.490v4.934a.378.378 0 0 1-.188.326L9.930 23.949a.316.316 0 0 1-.066.027c-.008.002-.016.008-.024.010a.348.348 0 0 1-.192 0c-.011-.002-.020-.008-.030-.012-.020-.008-.042-.014-.062-.025L.533 18.755a.376.376 0 0 1-.189-.326V2.974c0-.033.005-.066.014-.098.003-.012.010-.020.014-.032a.369.369 0 0 1 .023-.058c.004-.013.015-.022.023-.033l.033-.045c.012-.010.025-.018.037-.027.014-.012.027-.024.041-.034H.530L5.043.050a.375.375 0 0 1 .375 0L9.930 2.647h.002c.015.010.027.021.040.033l.038.027c.013.014.020.030.033.045.008.011.020.021.025.033.010.020.017.038.024.058.003.011.010.021.013.032.010.031.014.064.014.098v9.652l3.760-2.164V5.527c0-.033.004-.066.013-.098.003-.010.010-.020.013-.032a.487.487 0 0 1 .024-.059c.007-.012.018-.020.025-.033.012-.015.021-.030.033-.043.012-.012.025-.020.037-.028.014-.010.026-.023.041-.032h.001l4.513-2.598a.375.375 0 0 1 .375 0l4.513 2.598c.016.010.027.021.042.031.012.010.025.018.036.028.013.014.022.030.034.044.008.012.019.021.024.033.011.020.018.040.024.060.006.010.012.021.015.032zm-.740 5.032V6.179l-1.578.908-2.182 1.256v4.283zm-4.510 7.750v-4.287l-2.147 1.225-6.126 3.498v4.325zM1.093 3.624v14.588l8.273 4.761v-4.325l-4.322-2.445-.002-.003H5.040c-.014-.010-.025-.021-.040-.031-.011-.010-.024-.018-.035-.027l-.001-.002c-.013-.012-.021-.025-.031-.040-.010-.011-.021-.022-.028-.036h-.002c-.008-.014-.013-.031-.020-.047-.006-.016-.014-.027-.018-.043a.490.490 0 0 1-.008-.057c-.002-.014-.006-.027-.006-.041V5.789l-2.180-1.257zM5.230.810L1.470 2.974l3.760 2.164 3.758-2.164zm1.956 13.505l2.182-1.256V3.624l-1.580.910-2.182 1.255v9.435zm11.581-10.950l-3.760 2.163 3.760 2.163 3.759-2.164zm-.376 4.978L16.210 7.087 14.630 6.180v4.283l2.182 1.256 1.580.908zm-8.650 9.654l5.514-3.148 2.756-1.572-3.757-2.163-4.323 2.489-3.941 2.270z"/></svg>
<div class="t" style="left:138.00px;top:592.60px;font-size:22px;line-height:33px;color:#ccc;letter-spacing:0.109px;">index.blade.php</div>
<svg class="b" style="left:86px;top:633.6px;overflow:visible" width="28.2" height="25.8" viewBox="0 0 24 24" preserveAspectRatio="none"><path fill="#f0475b" stroke="#f0475b" stroke-width="0.850" stroke-linejoin="round" d="M23.642 5.430a.364.364 0 0 1 .014.100v5.149c0 .135-.073.260-.189.326l-4.323 2.490v4.934a.378.378 0 0 1-.188.326L9.930 23.949a.316.316 0 0 1-.066.027c-.008.002-.016.008-.024.010a.348.348 0 0 1-.192 0c-.011-.002-.020-.008-.030-.012-.020-.008-.042-.014-.062-.025L.533 18.755a.376.376 0 0 1-.189-.326V2.974c0-.033.005-.066.014-.098.003-.012.010-.020.014-.032a.369.369 0 0 1 .023-.058c.004-.013.015-.022.023-.033l.033-.045c.012-.010.025-.018.037-.027.014-.012.027-.024.041-.034H.530L5.043.050a.375.375 0 0 1 .375 0L9.930 2.647h.002c.015.010.027.021.040.033l.038.027c.013.014.020.030.033.045.008.011.020.021.025.033.010.020.017.038.024.058.003.011.010.021.013.032.010.031.014.064.014.098v9.652l3.760-2.164V5.527c0-.033.004-.066.013-.098.003-.010.010-.020.013-.032a.487.487 0 0 1 .024-.059c.007-.012.018-.020.025-.033.012-.015.021-.030.033-.043.012-.012.025-.020.037-.028.014-.010.026-.023.041-.032h.001l4.513-2.598a.375.375 0 0 1 .375 0l4.513 2.598c.016.010.027.021.042.031.012.010.025.018.036.028.013.014.022.030.034.044.008.012.019.021.024.033.011.020.018.040.024.060.006.010.012.021.015.032zm-.740 5.032V6.179l-1.578.908-2.182 1.256v4.283zm-4.510 7.750v-4.287l-2.147 1.225-6.126 3.498v4.325zM1.093 3.624v14.588l8.273 4.761v-4.325l-4.322-2.445-.002-.003H5.040c-.014-.010-.025-.021-.040-.031-.011-.010-.024-.018-.035-.027l-.001-.002c-.013-.012-.021-.025-.031-.040-.010-.011-.021-.022-.028-.036h-.002c-.008-.014-.013-.031-.020-.047-.006-.016-.014-.027-.018-.043a.490.490 0 0 1-.008-.057c-.002-.014-.006-.027-.006-.041V5.789l-2.180-1.257zM5.230.810L1.470 2.974l3.760 2.164 3.758-2.164zm1.956 13.505l2.182-1.256V3.624l-1.580.910-2.182 1.255v9.435zm11.581-10.950l-3.760 2.163 3.760 2.163 3.759-2.164zm-.376 4.978L16.210 7.087 14.630 6.180v4.283l2.182 1.256 1.580.908zm-8.650 9.654l5.514-3.148 2.756-1.572-3.757-2.163-4.323 2.489-3.941 2.270z"/></svg>
<div class="t" style="left:124.00px;top:630.60px;font-size:22px;line-height:33px;color:#ccc;letter-spacing:0.143px;">welcome.blade.php</div>
<svg class="b" style="left:34px;top:674.8px;" width="10" height="19" viewBox="0 0 10 19" preserveAspectRatio="none"><path d="M1.500 1.500L8.700 9.500L1.500 17.500" fill="none" stroke="#ccc" stroke-width="1.700"/></svg>
<svg class="b" style="left:58.7px;top:670.9749999999999px;overflow:visible" width="27.65" height="26.549999999999997" viewBox="0 0 24 24" preserveAspectRatio="none"><path fill="#4caf50" d="M10 4H4c-1.110 0-2 .890-2 2v12a2 2 0 0 0 2 2h16a2 2 0 0 0 2-2V8c0-1.110-.900-2-2-2h-8l-2-2z"/><path d="M15.500 22v-3.500c0-2.200-1.300-3.800-3.600-5M15.500 18.500c0-2.400 1.600-4.200 4.400-5.400" fill="none" stroke="#d7f0d8" stroke-width="2.100"/><path d="M8.800 10.300l5 .400-3.100 3.900z" fill="#d7f0d8"/><path d="M23.300 10.600l-4.900-.300 2.400 4.400z" fill="#d7f0d8"/></svg>
<div class="t" style="left:97.00px;top:668.60px;font-size:22px;line-height:33px;color:#ccc;letter-spacing:0.142px;">routes</div>
<svg class="b" style="left:34px;top:712.8px;" width="10" height="19" viewBox="0 0 10 19" preserveAspectRatio="none"><path d="M1.500 1.500L8.700 9.500L1.500 17.500" fill="none" stroke="#ccc" stroke-width="1.700"/></svg>
<svg class="b" style="left:58.7px;top:708.9749999999999px;overflow:visible" width="27.65" height="26.549999999999997" viewBox="0 0 24 24" preserveAspectRatio="none"><path fill="#1f8fe9" d="M10 4H4c-1.110 0-2 .890-2 2v12a2 2 0 0 0 2 2h16a2 2 0 0 0 2-2V8c0-1.110-.900-2-2-2h-8l-2-2z"/></svg>
<div class="t" style="left:97.00px;top:706.60px;font-size:22px;line-height:33px;color:#ccc;letter-spacing:0.088px;">storage</div>
<svg class="b" style="left:34px;top:750.8px;" width="10" height="19" viewBox="0 0 10 19" preserveAspectRatio="none"><path d="M1.500 1.500L8.700 9.500L1.500 17.500" fill="none" stroke="#ccc" stroke-width="1.700"/></svg>
<svg class="b" style="left:58.7px;top:746.9749999999999px;overflow:visible" width="27.65" height="26.549999999999997" viewBox="0 0 24 24" preserveAspectRatio="none"><path fill="#22cfa2" d="M10 4H4c-1.110 0-2 .890-2 2v12a2 2 0 0 0 2 2h16a2 2 0 0 0 2-2V8c0-1.110-.900-2-2-2h-8l-2-2z"/><path d="M14 11.500h7M15.500 11.500v3l-2.500 6.500h9l-2.500-6.500v-3" fill="none" stroke="#a7ffeb" stroke-width="1.400"/></svg>
<div class="t" style="left:97.00px;top:744.60px;font-size:22px;line-height:33px;color:#ccc;letter-spacing:-0.292px;">tests</div>
</div>
<div class="b" style="left:83px;top:159px;width:339px;height:5px;background:linear-gradient(#000000aa,#00000000)"></div>
<div class="b" style="left:83px;top:926px;width:339px;height:1px;background:#2b2b2b;"></div>
<svg class="b" style="left:96px;top:935.5px;" width="10" height="19" viewBox="0 0 10 19" preserveAspectRatio="none"><path d="M1.500 1.500L8.700 9.500L1.500 17.500" fill="none" stroke="#ccc" stroke-width="1.700"/></svg>
<div class="t" style="left:117.00px;top:932.30px;font-size:20px;line-height:30px;color:#ccc;letter-spacing:-0.900px;font-weight:bold;transform:scaleX(0.9942);transform-origin:0 50%;">OUTLINE</div>
<div class="b" style="left:83px;top:964px;width:339px;height:1px;background:#2b2b2b;"></div>
<svg class="b" style="left:96px;top:973.5px;" width="10" height="19" viewBox="0 0 10 19" preserveAspectRatio="none"><path d="M1.500 1.500L8.700 9.500L1.500 17.500" fill="none" stroke="#ccc" stroke-width="1.700"/></svg>
<div class="t" style="left:117.00px;top:970.30px;font-size:20px;line-height:30px;color:#ccc;letter-spacing:-0.900px;font-weight:bold;transform:scaleX(1.0101);transform-origin:0 50%;">TIMELINE</div>
<div class="b" style="left:83px;top:1002px;width:339px;height:1px;background:#2b2b2b;"></div>
<svg class="b" style="left:96px;top:1011.5px;" width="10" height="19" viewBox="0 0 10 19" preserveAspectRatio="none"><path d="M1.500 1.500L8.700 9.500L1.500 17.500" fill="none" stroke="#ccc" stroke-width="1.700"/></svg>
<div class="t" style="left:117.00px;top:1008.30px;font-size:20px;line-height:30px;color:#ccc;letter-spacing:-0.900px;font-weight:bold;transform:scaleX(0.9964);transform-origin:0 50%;">HOUSTON</div>
<div class="b" style="left:770px;top:60px;width:1px;height:59px;background:#2b2b2b;"></div>
<svg class="b" style="left:441px;top:78.1px;overflow:visible" width="28.2" height="25.8" viewBox="0 0 24 24" preserveAspectRatio="none"><path fill="#f0475b" stroke="#f0475b" stroke-width="0.850" stroke-linejoin="round" d="M23.642 5.430a.364.364 0 0 1 .014.100v5.149c0 .135-.073.260-.189.326l-4.323 2.490v4.934a.378.378 0 0 1-.188.326L9.930 23.949a.316.316 0 0 1-.066.027c-.008.002-.016.008-.024.010a.348.348 0 0 1-.192 0c-.011-.002-.020-.008-.030-.012-.020-.008-.042-.014-.062-.025L.533 18.755a.376.376 0 0 1-.189-.326V2.974c0-.033.005-.066.014-.098.003-.012.010-.020.014-.032a.369.369 0 0 1 .023-.058c.004-.013.015-.022.023-.033l.033-.045c.012-.010.025-.018.037-.027.014-.012.027-.024.041-.034H.530L5.043.050a.375.375 0 0 1 .375 0L9.930 2.647h.002c.015.010.027.021.040.033l.038.027c.013.014.020.030.033.045.008.011.020.021.025.033.010.020.017.038.024.058.003.011.010.021.013.032.010.031.014.064.014.098v9.652l3.760-2.164V5.527c0-.033.004-.066.013-.098.003-.010.010-.020.013-.032a.487.487 0 0 1 .024-.059c.007-.012.018-.020.025-.033.012-.015.021-.030.033-.043.012-.012.025-.020.037-.028.014-.010.026-.023.041-.032h.001l4.513-2.598a.375.375 0 0 1 .375 0l4.513 2.598c.016.010.027.021.042.031.012.010.025.018.036.028.013.014.022.030.034.044.008.012.019.021.024.033.011.020.018.040.024.060.006.010.012.021.015.032zm-.740 5.032V6.179l-1.578.908-2.182 1.256v4.283zm-4.510 7.750v-4.287l-2.147 1.225-6.126 3.498v4.325zM1.093 3.624v14.588l8.273 4.761v-4.325l-4.322-2.445-.002-.003H5.040c-.014-.010-.025-.021-.040-.031-.011-.010-.024-.018-.035-.027l-.001-.002c-.013-.012-.021-.025-.031-.040-.010-.011-.021-.022-.028-.036h-.002c-.008-.014-.013-.031-.020-.047-.006-.016-.014-.027-.018-.043a.490.490 0 0 1-.008-.057c-.002-.014-.006-.027-.006-.041V5.789l-2.180-1.257zM5.230.810L1.470 2.974l3.760 2.164 3.758-2.164zm1.956 13.505l2.182-1.256V3.624l-1.580.910-2.182 1.255v9.435zm11.581-10.950l-3.760 2.163 3.760 2.163 3.759-2.164zm-.376 4.978L16.210 7.087 14.630 6.180v4.283l2.182 1.256 1.580.908zm-8.650 9.654l5.514-3.148 2.756-1.572-3.757-2.163-4.323 2.489-3.941 2.270z"/></svg>
<div class="t" style="left:479.00px;top:74.50px;font-size:22px;line-height:33px;color:#9d9d9d;letter-spacing:0.043px;">index.blade.php</div>
<div class="t" style="left:647.00px;top:77.00px;font-size:20px;line-height:30px;color:#707070;letter-spacing:-0.066px;">...\codex</div>
<div class="b" style="left:771px;top:60px;width:355px;height:60px;background:#1f1f1f;"></div>
<div class="b" style="left:771px;top:60px;width:355px;height:2px;background:#0a7ad2;"></div>
<div class="b" style="left:1126px;top:60px;width:1px;height:59px;background:#2b2b2b;"></div>
<svg class="b" style="left:787px;top:78.1px;overflow:visible" width="28.2" height="25.8" viewBox="0 0 24 24" preserveAspectRatio="none"><path fill="#f0475b" stroke="#f0475b" stroke-width="0.850" stroke-linejoin="round" d="M23.642 5.430a.364.364 0 0 1 .014.100v5.149c0 .135-.073.260-.189.326l-4.323 2.490v4.934a.378.378 0 0 1-.188.326L9.930 23.949a.316.316 0 0 1-.066.027c-.008.002-.016.008-.024.010a.348.348 0 0 1-.192 0c-.011-.002-.020-.008-.030-.012-.020-.008-.042-.014-.062-.025L.533 18.755a.376.376 0 0 1-.189-.326V2.974c0-.033.005-.066.014-.098.003-.012.010-.020.014-.032a.369.369 0 0 1 .023-.058c.004-.013.015-.022.023-.033l.033-.045c.012-.010.025-.018.037-.027.014-.012.027-.024.041-.034H.530L5.043.050a.375.375 0 0 1 .375 0L9.930 2.647h.002c.015.010.027.021.040.033l.038.027c.013.014.020.030.033.045.008.011.020.021.025.033.010.020.017.038.024.058.003.011.010.021.013.032.010.031.014.064.014.098v9.652l3.760-2.164V5.527c0-.033.004-.066.013-.098.003-.010.010-.020.013-.032a.487.487 0 0 1 .024-.059c.007-.012.018-.020.025-.033.012-.015.021-.030.033-.043.012-.012.025-.020.037-.028.014-.010.026-.023.041-.032h.001l4.513-2.598a.375.375 0 0 1 .375 0l4.513 2.598c.016.010.027.021.042.031.012.010.025.018.036.028.013.014.022.030.034.044.008.012.019.021.024.033.011.020.018.040.024.060.006.010.012.021.015.032zm-.740 5.032V6.179l-1.578.908-2.182 1.256v4.283zm-4.510 7.750v-4.287l-2.147 1.225-6.126 3.498v4.325zM1.093 3.624v14.588l8.273 4.761v-4.325l-4.322-2.445-.002-.003H5.040c-.014-.010-.025-.021-.040-.031-.011-.010-.024-.018-.035-.027l-.001-.002c-.013-.012-.021-.025-.031-.040-.010-.011-.021-.022-.028-.036h-.002c-.008-.014-.013-.031-.020-.047-.006-.016-.014-.027-.018-.043a.490.490 0 0 1-.008-.057c-.002-.014-.006-.027-.006-.041V5.789l-2.180-1.257zM5.230.810L1.470 2.974l3.760 2.164 3.758-2.164zm1.956 13.505l2.182-1.256V3.624l-1.580.910-2.182 1.255v9.435zm11.581-10.950l-3.760 2.163 3.760 2.163 3.759-2.164zm-.376 4.978L16.210 7.087 14.630 6.180v4.283l2.182 1.256 1.580.908zm-8.650 9.654l5.514-3.148 2.756-1.572-3.757-2.163-4.323 2.489-3.941 2.270z"/></svg>
<div class="t" style="left:826.00px;top:74.50px;font-size:22px;line-height:33px;color:#ffffff;letter-spacing:0.109px;">index.blade.php</div>
<div class="t" style="left:993.00px;top:77.00px;font-size:20px;line-height:30px;color:#a6a6a6;letter-spacing:0.349px;">...\outline</div>
<div class="b" style="left:1095.400px;top:83.300px;width:14.600px;height:14.600px;border-radius:50%;background:#fff"></div>
<svg class="b" style="left:1824px;top:77px;" width="26" height="26" viewBox="0 0 26 26" preserveAspectRatio="none"><rect x="1.500" y="1.500" width="21.500" height="22" rx="2" fill="none" stroke="#ccc" stroke-width="1.900"/><path d="M12.250 1.500V23.500" stroke="#ccc" stroke-width="1.900"/></svg>
<div class="b" style="left:1869.4px;top:88.4px;width:3.200px;height:3.200px;border-radius:50%;background:#ccc"></div>
<div class="b" style="left:1878.9px;top:88.4px;width:3.200px;height:3.200px;border-radius:50%;background:#ccc"></div>
<div class="b" style="left:1888.4px;top:88.4px;width:3.200px;height:3.200px;border-radius:50%;background:#ccc"></div>
<div class="t" style="left:451.00px;top:124.50px;font-size:22px;line-height:33px;color:#a9a9a9;letter-spacing:-0.289px;">resources</div>
<svg class="b" style="left:555px;top:131.5px;" width="10" height="19" viewBox="0 0 10 19" preserveAspectRatio="none"><path d="M1.500 1.500L8.700 9.500L1.500 17.500" fill="none" stroke="#a9a9a9" stroke-width="1.700"/></svg>
<div class="t" style="left:573.00px;top:124.50px;font-size:22px;line-height:33px;color:#a9a9a9;letter-spacing:-0.202px;">views</div>
<svg class="b" style="left:637px;top:131.5px;" width="10" height="19" viewBox="0 0 10 19" preserveAspectRatio="none"><path d="M1.500 1.500L8.700 9.500L1.500 17.500" fill="none" stroke="#a9a9a9" stroke-width="1.700"/></svg>
<div class="t" style="left:655.00px;top:124.50px;font-size:22px;line-height:33px;color:#a9a9a9;letter-spacing:0.453px;">outline</div>
<svg class="b" style="left:732.5px;top:131.5px;" width="10" height="19" viewBox="0 0 10 19" preserveAspectRatio="none"><path d="M1.500 1.500L8.700 9.500L1.500 17.500" fill="none" stroke="#a9a9a9" stroke-width="1.700"/></svg>
<svg class="b" style="left:751px;top:128.1px;overflow:visible" width="28.2" height="25.8" viewBox="0 0 24 24" preserveAspectRatio="none"><path fill="#f0475b" stroke="#f0475b" stroke-width="0.850" stroke-linejoin="round" d="M23.642 5.430a.364.364 0 0 1 .014.100v5.149c0 .135-.073.260-.189.326l-4.323 2.490v4.934a.378.378 0 0 1-.188.326L9.930 23.949a.316.316 0 0 1-.066.027c-.008.002-.016.008-.024.010a.348.348 0 0 1-.192 0c-.011-.002-.020-.008-.030-.012-.020-.008-.042-.014-.062-.025L.533 18.755a.376.376 0 0 1-.189-.326V2.974c0-.033.005-.066.014-.098.003-.012.010-.020.014-.032a.369.369 0 0 1 .023-.058c.004-.013.015-.022.023-.033l.033-.045c.012-.010.025-.018.037-.027.014-.012.027-.024.041-.034H.530L5.043.050a.375.375 0 0 1 .375 0L9.930 2.647h.002c.015.010.027.021.040.033l.038.027c.013.014.020.030.033.045.008.011.020.021.025.033.010.020.017.038.024.058.003.011.010.021.013.032.010.031.014.064.014.098v9.652l3.760-2.164V5.527c0-.033.004-.066.013-.098.003-.010.010-.020.013-.032a.487.487 0 0 1 .024-.059c.007-.012.018-.020.025-.033.012-.015.021-.030.033-.043.012-.012.025-.020.037-.028.014-.010.026-.023.041-.032h.001l4.513-2.598a.375.375 0 0 1 .375 0l4.513 2.598c.016.010.027.021.042.031.012.010.025.018.036.028.013.014.022.030.034.044.008.012.019.021.024.033.011.020.018.040.024.060.006.010.012.021.015.032zm-.740 5.032V6.179l-1.578.908-2.182 1.256v4.283zm-4.510 7.750v-4.287l-2.147 1.225-6.126 3.498v4.325zM1.093 3.624v14.588l8.273 4.761v-4.325l-4.322-2.445-.002-.003H5.040c-.014-.010-.025-.021-.040-.031-.011-.010-.024-.018-.035-.027l-.001-.002c-.013-.012-.021-.025-.031-.040-.010-.011-.021-.022-.028-.036h-.002c-.008-.014-.013-.031-.020-.047-.006-.016-.014-.027-.018-.043a.490.490 0 0 1-.008-.057c-.002-.014-.006-.027-.006-.041V5.789l-2.180-1.257zM5.230.810L1.470 2.974l3.760 2.164 3.758-2.164zm1.956 13.505l2.182-1.256V3.624l-1.580.910-2.182 1.255v9.435zm11.581-10.950l-3.760 2.163 3.760 2.163 3.759-2.164zm-.376 4.978L16.210 7.087 14.630 6.180v4.283l2.182 1.256 1.580.908zm-8.650 9.654l5.514-3.148 2.756-1.572-3.757-2.163-4.323 2.489-3.941 2.270z"/></svg>
<div class="t" style="left:789.00px;top:124.50px;font-size:22px;line-height:33px;color:#a9a9a9;letter-spacing:0.043px;">index.blade.php</div>
<div class="b" style="left:423px;top:159px;width:1497px;height:882px;overflow:hidden">
<div class="b" style="left:118px;top:731.89px;width:1354px;height:30.83px;border-top:1px solid #292929;border-bottom:1px solid #292929"></div>
<div class="b" style="left:119.00px;top:-23.25px;width:1.2px;height:164.16px;background:#464646"></div>
<div class="b" style="left:145.60px;top:-23.25px;width:1.2px;height:131.33px;background:#3e3e3e"></div>
<div class="b" style="left:172.20px;top:-23.25px;width:1.2px;height:98.50px;background:#3e3e3e"></div>
<div class="b" style="left:198.80px;top:-23.25px;width:1.2px;height:65.66px;background:#3e3e3e"></div>
<div class="b" style="left:225.40px;top:-23.25px;width:1.2px;height:32.83px;background:#3e3e3e"></div>
<div class="b" style="left:119.00px;top:206.58px;width:1.2px;height:623.81px;background:#464646"></div>
<div class="b" style="left:145.60px;top:239.41px;width:1.2px;height:361.15px;background:#3e3e3e"></div>
<div class="b" style="left:172.20px;top:337.90px;width:1.2px;height:196.99px;background:#3e3e3e"></div>
<div class="b" style="left:198.80px;top:436.40px;width:1.2px;height:65.66px;background:#3e3e3e"></div>
<div class="b" style="left:145.60px;top:699.06px;width:1.2px;height:98.50px;background:#3e3e3e"></div>
<div class="b" style="left:172.20px;top:731.89px;width:1.4px;height:32.83px;background:#9d9d9d"></div>
<div class="b" style="left:717.00px;top:699.36px;width:13.30px;height:32.03px;border:1px solid #888;box-sizing:border-box"></div>
<div class="b" style="left:171.70px;top:765.02px;width:13.30px;height:32.03px;border:1px solid #888;box-sizing:border-box"></div>
<div class="c" style="left:45.70px;top:-20.33px;color:#6e7681">69</div>
<div class="c" style="left:118.20px;top:-20.33px">          <span style="color:#da70d6">}</span><span style="color:#ffd700">)</span></div>
<div class="c" style="left:45.70px;top:12.50px;color:#6e7681">70</div>
<div class="c" style="left:118.20px;top:12.50px">        <span style="color:#179fff">}</span></div>
<div class="c" style="left:45.70px;top:45.33px;color:#6e7681">71</div>
<div class="c" style="left:118.20px;top:45.33px">      <span style="color:#da70d6">}</span><span style="color:#ffd700">)</span></div>
<div class="c" style="left:45.70px;top:78.16px;color:#6e7681">72</div>
<div class="c" style="left:118.20px;top:78.16px">    <span style="color:#179fff">}</span></div>
<div class="c" style="left:45.70px;top:111.00px;color:#6e7681">73</div>
<div class="c" style="left:118.20px;top:111.00px">  <span style="color:#da70d6">}</span><span style="color:#ffd700">)</span></div>
<div class="c" style="left:45.70px;top:143.83px;color:#6e7681">74</div>
<div class="c" style="left:118.20px;top:143.83px"><span style="color:#808080">&lt;/</span><span style="color:#569cd6">script</span><span style="color:#808080">&gt;</span></div>
<div class="c" style="left:45.70px;top:176.66px;color:#6e7681">75</div>
<div class="c" style="left:118.20px;top:176.66px"><span style="color:#808080">&lt;</span><span style="color:#569cd6">script</span><span style="color:#808080">&gt;</span></div>
<div class="c" style="left:45.70px;top:209.49px;color:#6e7681">76</div>
<div class="c" style="left:118.20px;top:209.49px">  <span style="color:#9cdcfe">document</span><span style="color:#d4d4d4">.</span><span style="color:#dcdcaa">addEventListener</span><span style="color:#ffd700">(</span><span style="color:#ce9178">&#x27;alpine:init&#x27;</span><span style="color:#d4d4d4">, </span><span style="color:#da70d6">()</span> <span style="color:#569cd6">=&gt;</span> <span style="color:#da70d6">{</span></div>
<div class="c" style="left:45.70px;top:242.32px;color:#6e7681">77</div>
<div class="c" style="left:45.70px;top:275.16px;color:#6e7681">78</div>
<div class="c" style="left:118.20px;top:275.16px">    <span style="color:#6a9955">// alpine store for codex state</span></div>
<div class="c" style="left:45.70px;top:307.99px;color:#6e7681">79</div>
<div class="c" style="left:118.20px;top:307.99px">    <span style="color:#9cdcfe">Alpine</span><span style="color:#d4d4d4">.</span><span style="color:#dcdcaa">store</span><span style="color:#179fff">(</span><span style="color:#ce9178">&#x27;codex&#x27;</span><span style="color:#d4d4d4">, </span><span style="color:#ffd700">{</span></div>
<div class="c" style="left:45.70px;top:340.82px;color:#6e7681">80</div>
<div class="c" style="left:118.20px;top:340.82px">      <span style="color:#9cdcfe">filter</span><span style="color:#9cdcfe">: </span><span style="color:#ce9178">&#x27;all&#x27;</span><span style="color:#d4d4d4">,</span></div>
<div class="c" style="left:45.70px;top:373.65px;color:#6e7681">81</div>
<div class="c" style="left:118.20px;top:373.65px">      <span style="color:#9cdcfe">search</span><span style="color:#9cdcfe">: </span><span style="color:#ce9178">&#x27;&#x27;</span><span style="color:#d4d4d4">,</span></div>
<div class="c" style="left:45.70px;top:406.48px;color:#6e7681">82</div>
<div class="c" style="left:118.20px;top:406.48px">      <span style="color:#dcdcaa">matches</span><span style="color:#da70d6">(</span><span style="color:#9cdcfe">name</span><span style="color:#da70d6">)</span> <span style="color:#da70d6">{</span></div>
<div class="c" style="left:45.70px;top:439.32px;color:#6e7681">83</div>
<div class="c" style="left:118.20px;top:439.32px">        <span style="color:#569cd6">const</span> <span style="color:#4fc1ff">term</span><span style="color:#d4d4d4"> = </span><span style="color:#569cd6">this</span><span style="color:#d4d4d4">.</span><span style="color:#9cdcfe">search</span><span style="color:#d4d4d4">.</span><span style="color:#dcdcaa">trim</span><span style="color:#179fff">()</span><span style="color:#d4d4d4">.</span><span style="color:#dcdcaa">toLowerCase</span><span style="color:#179fff">()</span></div>
<div class="c" style="left:45.70px;top:472.15px;color:#6e7681">84</div>
<div class="c" style="left:118.20px;top:472.15px">        <span style="color:#c586c0">return</span> <span style="color:#4fc1ff">term</span><span style="color:#d4d4d4"> === </span><span style="color:#ce9178">&#x27;&#x27;</span><span style="color:#d4d4d4"> || </span><span style="color:#9cdcfe">name</span><span style="color:#d4d4d4">.</span><span style="color:#dcdcaa">toLowerCase</span><span style="color:#179fff">()</span><span style="color:#d4d4d4">.</span><span style="color:#dcdcaa">includes</span><span style="color:#179fff">(</span><span style="color:#4fc1ff">term</span><span style="color:#179fff">)</span></div>
<div class="c" style="left:45.70px;top:504.98px;color:#6e7681">85</div>
<div class="c" style="left:118.20px;top:504.98px">      <span style="color:#da70d6">}</span></div>
<div class="c" style="left:45.70px;top:537.81px;color:#6e7681">86</div>
<div class="c" style="left:118.20px;top:537.81px">    <span style="color:#ffd700">}</span><span style="color:#179fff">)</span></div>
<div class="c" style="left:45.70px;top:570.64px;color:#6e7681">87</div>
<div class="c" style="left:45.70px;top:603.48px;color:#6e7681">88</div>
<div class="c" style="left:118.20px;top:603.48px">  <span style="color:#da70d6">}</span><span style="color:#ffd700">)</span></div>
<div class="c" style="left:45.70px;top:636.31px;color:#6e7681">89</div>
<div class="c" style="left:45.70px;top:669.14px;color:#6e7681">90</div>
<div class="c" style="left:118.20px;top:669.14px">  <span style="color:#9cdcfe">document</span><span style="color:#d4d4d4">.</span><span style="color:#dcdcaa">addEventListener</span><span style="color:#ffd700">(</span><span style="color:#ce9178">&#x27;htmx:afterSwap&#x27;</span><span style="color:#d4d4d4">, </span><span style="color:#da70d6">(</span><span style="color:#9cdcfe">e</span><span style="color:#da70d6">)</span> <span style="color:#569cd6">=&gt;</span> <span style="color:#da70d6">{</span></div>
<div class="c" style="left:45.70px;top:701.97px;color:#6e7681">91</div>
<div class="c" style="left:118.20px;top:701.97px">    <span style="color:#c586c0">if</span> <span style="color:#179fff">(</span><span style="color:#9cdcfe">e</span><span style="color:#d4d4d4">.</span><span style="color:#9cdcfe">detail</span><span style="color:#d4d4d4">.</span><span style="color:#9cdcfe">target</span><span style="color:#d4d4d4">.</span><span style="color:#9cdcfe">id</span><span style="color:#d4d4d4"> === </span><span style="color:#ce9178">&#x27;codex-list&#x27;</span><span style="color:#179fff">)</span> <span style="color:#179fff">{</span></div>
<div class="c" style="left:45.70px;top:734.80px;color:#ccc">92</div>
<div class="c" style="left:118.20px;top:734.80px">      <span style="color:#9cdcfe">Alpine</span><span style="color:#d4d4d4">.</span><span style="color:#dcdcaa">store</span><span style="color:#ffd700">(</span><span style="color:#ce9178">&#x27;codex&#x27;</span><span style="color:#ffd700">)</span><span style="color:#d4d4d4">.</span><span style="color:#9cdcfe">search</span><span style="color:#d4d4d4"> = </span><span style="color:#7a7572">&#x27;&#x27;</span></div>
<div class="c" style="left:45.70px;top:767.64px;color:#6e7681">93</div>
<div class="c" style="left:118.20px;top:767.64px">    <span style="color:#179fff">}</span></div>
<div class="c" style="left:45.70px;top:800.47px;color:#6e7681">94</div>
<div class="c" style="left:118.20px;top:800.47px">  <span style="color:#da70d6">}</span><span style="color:#ffd700">)</span></div>
<div class="c" style="left:45.70px;top:833.30px;color:#6e7681">95</div>
<div class="c" style="left:118.20px;top:833.30px"><span style="color:#808080">&lt;/</span><span style="color:#569cd6">script</span><span style="color:#808080">&gt;</span></div>
<div class="c" style="left:45.70px;top:866.13px;color:#6e7681">96</div>
<div class="c" style="left:118.20px;top:866.13px"><span style="color:#569cd6">@endpush</span></div>
</div>
<div class="b" style="left:423px;top:159px;width:1473px;height:6px;background:linear-gradient(#000000b0,#00000000)"></div>
<div class="b" style="left:1895px;top:159px;width:1px;height:882px;background:#2b2b2b;"></div>
<div class="b" style="left:1896px;top:657px;width:24px;height:193px;background:#424242;"></div>
<div class="b" style="left:1896px;top:816px;width:24px;height:2px;background:#a0a0a0;"></div>
<svg class="b" style="left:1646px;top:619.5px;" width="9" height="17" viewBox="0 0 9 17" preserveAspectRatio="none"><path d="M1 1H8M1 16H8M4.500 1V16" fill="none" stroke="#1a1a1a" stroke-width="2.600"/><path d="M1 1H8M1 16H8M4.500 1V16" fill="none" stroke="#f4f4f4" stroke-width="1.100"/></svg>
<div class="b" style="left:0px;top:1041px;width:1920px;height:39px;background:#181818;"></div>
<div class="b" style="left:0px;top:1040px;width:1920px;height:1px;background:#2b2b2b;"></div>
<div class="b" style="left:0px;top:1041px;width:59px;height:39px;background:#0078d4;"></div>
<svg class="b" style="left:18px;top:1048px;" width="24" height="22" viewBox="0 0 24 22" preserveAspectRatio="none"><path d="M4.300 7L11.200 13L4.500 19.500M18 2L12.800 8L18 13.700" fill="none" stroke="#fff" stroke-width="1.800"/></svg>
<svg class="b" style="left:73.3px;top:1047.7px;" width="22" height="22" viewBox="0 0 22 22" preserveAspectRatio="none"><circle cx="11" cy="11" r="9.600" fill="none" stroke="#ccc" stroke-width="1.700"/><path d="M7 7L15 15M15 7L7 15" stroke="#ccc" stroke-width="1.700"/></svg>
<div class="t" style="left:102.50px;top:1043.30px;font-size:20.5px;line-height:31px;color:#ccc;letter-spacing:-0.402px;">0</div>
<svg class="b" style="left:120.2px;top:1047.2px;" width="22" height="22" viewBox="0 0 22 22" preserveAspectRatio="none"><path d="M11 2.500L20.500 19.500H1.500Z" fill="none" stroke="#ccc" stroke-width="1.500" stroke-linejoin="round"/><path d="M11 8.500V14" stroke="#ccc" stroke-width="1.700"/><circle cx="11" cy="16.600" r="1.100" fill="#ccc"/></svg>
<div class="t" style="left:149.50px;top:1043.30px;font-size:20.5px;line-height:31px;color:#ccc;letter-spacing:-0.402px;">0</div>
<div class="b" style="left:996px;top:1041px;width:58px;height:39px;background:#2d2d2d;"></div>
<svg class="b" style="left:1013px;top:1047px;" width="26" height="26" viewBox="0 0 26 26" preserveAspectRatio="none"><circle cx="10.500" cy="10.500" r="8" fill="none" stroke="#ccc" stroke-width="1.600"/><path d="M16.300 16.300L23.500 23.500M6.500 10.500H14.500M10.500 6.500V14.500" stroke="#ccc" stroke-width="1.600" fill="none"/></svg>
<div class="t" style="left:1069.00px;top:1043.70px;font-size:20.5px;line-height:31px;color:#ccc;letter-spacing:-0.304px;">Ln 92, Col 39</div>
<div class="t" style="left:1214.00px;top:1043.70px;font-size:20.5px;line-height:31px;color:#ccc;letter-spacing:-0.797px;">Spaces: 2</div>
<div class="t" style="left:1326.00px;top:1043.70px;font-size:20.5px;line-height:31px;color:#ccc;letter-spacing:-0.616px;">UTF-8</div>
<div class="t" style="left:1408.00px;top:1043.70px;font-size:20.5px;line-height:31px;color:#ccc;letter-spacing:-1.462px;">LF</div>
<div class="t" style="left:1458.50px;top:1042.70px;font-size:20.5px;line-height:31px;color:#ccc;letter-spacing:5.653px;">{}</div>
<div class="t" style="left:1491.00px;top:1043.70px;font-size:20.5px;line-height:31px;color:#ccc;letter-spacing:-0.487px;">Blade</div>
<svg class="b" style="left:1568px;top:1049.5px;" width="24.5" height="20.5" viewBox="0 0 29.400 24.800" preserveAspectRatio="none"><g fill="#d0d0d0"><rect x="3.500" y="0" width="12.400" height="12.500" rx="5.600"/><rect x="13.500" y="0" width="12.400" height="12.500" rx="5.600"/><ellipse cx="14.700" cy="16.800" rx="14.200" ry="8"/></g><g fill="#181818"><rect x="6.500" y="3" width="6.500" height="6.200" rx="2.400"/><rect x="16.400" y="3" width="6.500" height="6.200" rx="2.400"/><path d="M6.300 14.300C6.300 13.400 7 12.800 7.900 12.800H12.700L14.700 11.300L16.700 12.800H21.500C22.400 12.800 23.100 13.400 23.100 14.300V19C23.100 20.100 22.300 20.900 21.200 20.900H8.200C7.100 20.900 6.300 20.100 6.300 19Z"/></g><g fill="#d0d0d0"><rect x="10.400" y="14.400" width="2.700" height="5.300" rx="0.600"/><rect x="16.400" y="14.400" width="2.700" height="5.300" rx="0.600"/></g></svg>
<svg class="b" style="left:1621px;top:1048px;" width="24" height="24" viewBox="0 0 24 24" preserveAspectRatio="none"><g fill="none" stroke="#ccc" stroke-width="1.700"><circle cx="12" cy="10.500" r="2.400" fill="#ccc" stroke="none"/><path d="M12 12V21.500" stroke-width="2.600"/><path d="M8.700 14.300A5 5 0 1 1 15.300 14.300"/><path d="M6.300 17.300A9 9 0 1 1 17.700 17.300"/></g></svg>
<div class="t" style="left:1651.00px;top:1043.70px;font-size:20.5px;line-height:31px;color:#ccc;letter-spacing:-0.521px;">Go Live</div>
<svg class="b" style="left:1746px;top:1049px;" width="22" height="22" viewBox="0 0 22 22" preserveAspectRatio="none"><circle cx="11" cy="11" r="9.500" fill="none" stroke="#ccc" stroke-width="1.500"/><path d="M4.300 17.700L17.700 4.300" stroke="#ccc" stroke-width="1.500"/></svg>
<div class="t" style="left:1776.00px;top:1043.70px;font-size:20.5px;line-height:31px;color:#ccc;letter-spacing:0.115px;">Prettier</div>
<svg class="b" style="left:1870px;top:1047px;" width="26" height="26" viewBox="0 0 26 26" preserveAspectRatio="none"><path d="M12 4.500C8 4.500 6 7.500 6 11V16L3.500 19.500H20.500L18 16V13" fill="none" stroke="#ccc" stroke-width="1.600" stroke-linejoin="round"/><path d="M9.500 20.500A2.500 2.500 0 0 0 14.500 20.500" fill="none" stroke="#ccc" stroke-width="1.600"/><circle cx="19" cy="6.500" r="4" fill="#ccc"/></svg>
</body></html>
